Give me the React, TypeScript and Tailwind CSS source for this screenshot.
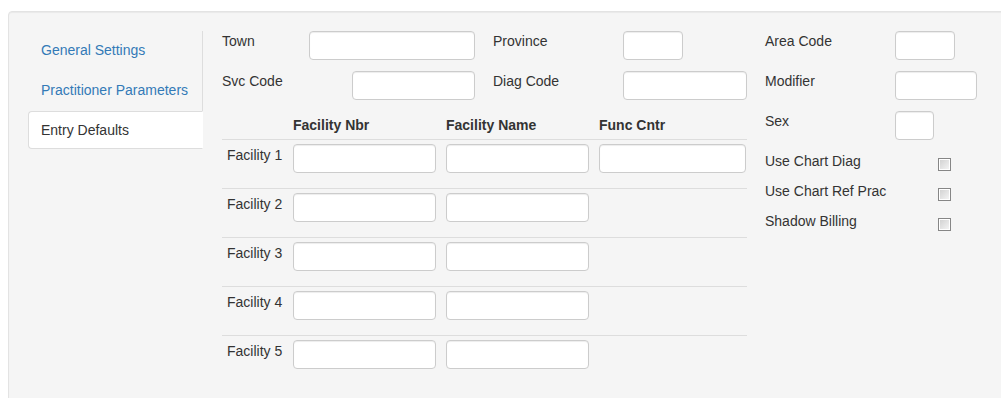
import type { ReactNode } from "react";

const inputCls =
  "block h-[29px] rounded-[4px] border border-[#cccccc] bg-white shadow-[inset_0_1px_1px_rgba(0,0,0,0.075)]";

function Field({
  label,
  labelW,
  inputW,
}: {
  label: string;
  labelW: string;
  inputW: string;
}) {
  return (
    <div className="flex items-start">
      <label className={`${labelW} leading-[20px]`}>{label}</label>
      <input type="text" className={`${inputCls} ${inputW}`} />
    </div>
  );
}

function Check({ label }: { label: string }) {
  return (
    <div className="mb-[10px] flex h-[20px] items-start">
      <span className="w-[173px] leading-[20px]">{label}</span>
      <span className="mt-[7px] block h-[13px] w-[13px] border border-[#868686] bg-gradient-to-br from-[#cfcfcf] to-[#f7f7f7] shadow-[inset_0_0_0_1px_#ffffff]" />
    </div>
  );
}

function NavItem({ children, active }: { children: ReactNode; active?: boolean }) {
  if (active) {
    return (
      <li className="mb-[2px] -mr-[1px] flex h-[38px] items-center rounded-l-[4px] border border-r-transparent border-[#dddddd] bg-white px-[12px] text-[#333333]">
        {children}
      </li>
    );
  }
  return (
    <li className="mb-[2px] flex h-[38px] items-center border border-transparent px-[12px] text-[#337ab7]">
      {children}
    </li>
  );
}

const facilities = [1, 2, 3, 4, 5];

export default function App() {
  return (
    <div
      className="h-[398px] w-[1001px] overflow-hidden bg-white pl-[8px] pt-[11px] text-[14px] text-[#333333]"
      style={{ fontFamily: '"Liberation Sans", Arial, sans-serif' }}
    >
      <div className="flex h-[420px] w-[1020px] gap-[19px] rounded-[4px] border border-[#e3e3e3] bg-[#f5f5f5] p-[19px] shadow-[inset_0_1px_1px_rgba(0,0,0,0.05)]">
        <ul className="h-[118px] w-[175px] shrink-0 border-r border-[#dddddd]">
          <NavItem>General Settings</NavItem>
          <NavItem>Practitioner Parameters</NavItem>
          <NavItem active>Entry Defaults</NavItem>
        </ul>

        <div className="flex gap-[18px]">
          <div className="w-[525px]">
            <div className="mb-[11px] flex gap-[18px]">
              <div className="w-[253px]">
                <Field label="Town" labelW="w-[87px]" inputW="w-[166px]" />
              </div>
              <Field label="Province" labelW="w-[130px]" inputW="w-[60px]" />
            </div>
            <div className="mb-[11px] flex gap-[18px]">
              <div className="w-[253px]">
                <Field label="Svc Code" labelW="w-[130px]" inputW="w-[123px]" />
              </div>
              <Field label="Diag Code" labelW="w-[130px]" inputW="w-[124px]" />
            </div>

            <div className="flex pb-[4px] pt-[4px] font-bold leading-[20px]">
              <div className="w-[71px]" />
              <div className="w-[153px]">Facility Nbr</div>
              <div className="w-[153px]">Facility Name</div>
              <div className="w-[148px]">Func Cntr</div>
            </div>
            {facilities.map((n) => (
              <div key={n} className="flex border-t border-[#dddddd] pb-[15px] pt-[4px]">
                <div className="w-[71px] pl-[5px] pt-[1px] leading-[20px]">Facility {n}</div>
                <div className="w-[153px]">
                  <input type="text" className={`${inputCls} w-[143px]`} />
                </div>
                <div className="w-[153px]">
                  <input type="text" className={`${inputCls} w-[143px]`} />
                </div>
                {n === 1 ? (
                  <div className="w-[148px]">
                    <input type="text" className={`${inputCls} w-[147px]`} />
                  </div>
                ) : null}
              </div>
            ))}
          </div>

          <div className="w-[220px]">
            <div className="mb-[11px]">
              <Field label="Area Code" labelW="w-[130px]" inputW="w-[60px]" />
            </div>
            <div className="mb-[11px]">
              <Field label="Modifier" labelW="w-[130px]" inputW="w-[82px]" />
            </div>
            <div className="mb-[11px]">
              <Field label="Sex" labelW="w-[130px]" inputW="w-[39px]" />
            </div>
            <Check label="Use Chart Diag" />
            <Check label="Use Chart Ref Prac" />
            <Check label="Shadow Billing" />
          </div>
        </div>
      </div>
    </div>
  );
}
